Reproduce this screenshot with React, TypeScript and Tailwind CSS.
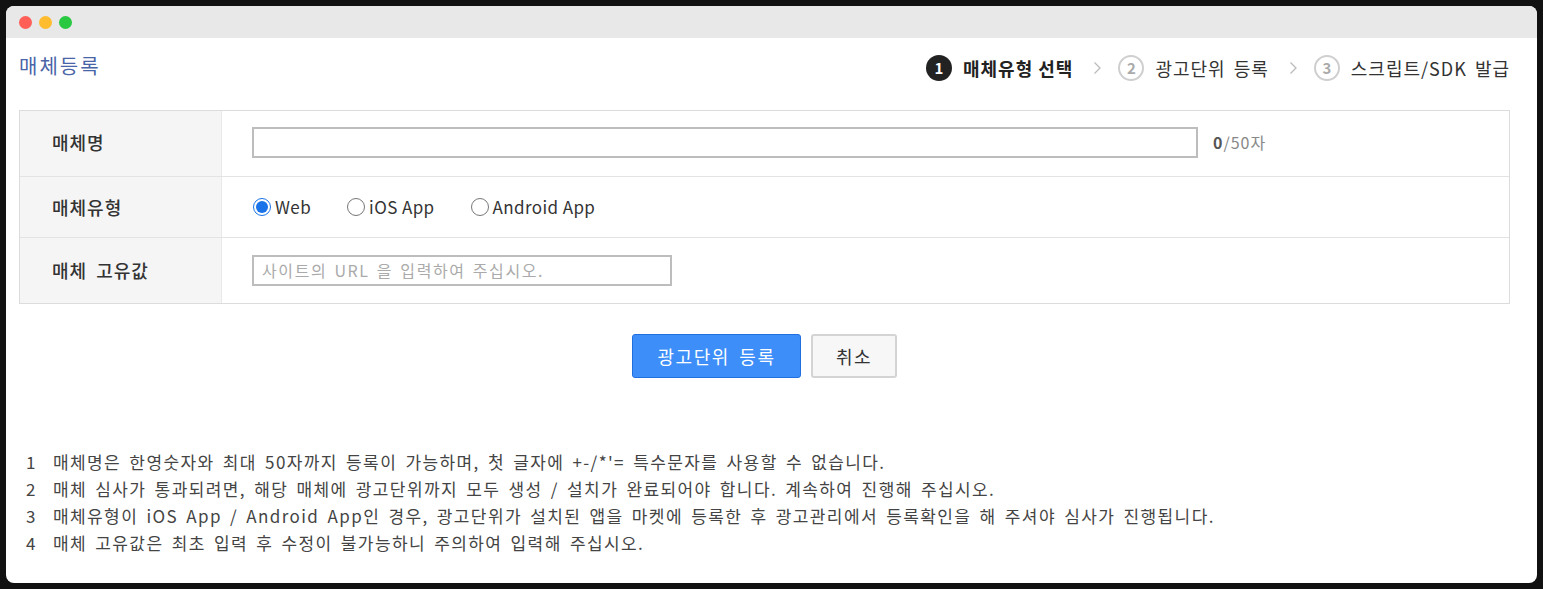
import { useState } from "react";

const font = { fontFamily: '"Noto Sans CJK KR", "Noto Sans", sans-serif' };

// Step indicator in the page header
const Step: React.FC<{ n: number; label: string; active?: boolean }> = ({ n, label, active }) => (
  <div className="flex items-center gap-[11px]">
    {active ? (
      <span className="flex h-[26px] w-[26px] items-center justify-center rounded-full bg-[#222] text-[15px] font-bold text-white">{n}</span>
    ) : (
      <span className="flex h-[26px] w-[26px] items-center justify-center rounded-full border-2 border-[#cfcfcf] text-[15px] font-bold text-[#aaa]">{n}</span>
    )}
    <span
      className={
        active
          ? "text-[18px] font-bold tracking-[1px] text-[#222]"
          : "text-[18px] tracking-[1px] [word-spacing:3px] text-[#333]"
      }
    >
      {label}
    </span>
  </div>
);

const Chevron: React.FC = () => (
  <svg width="9" height="14" viewBox="0 0 9 14" className="ml-[20px] mr-[16px]">
    <path d="M1.5 1.5 L7 7 L1.5 12.5" fill="none" stroke="#bbb" strokeWidth="1.3" />
  </svg>
);

const Radio: React.FC<{ label: string; checked: boolean; onClick: () => void }> = ({ label, checked, onClick }) => (
  <label className="flex cursor-pointer items-center gap-[4px] text-[17px] tracking-[0.4px] text-[#333]" onClick={onClick}>
    <span className={"flex h-[18px] w-[18px] items-center justify-center rounded-full border " + (checked ? "border-[#1a73e8]" : "border-[#777]")}>
      {checked && <span className="h-[12px] w-[12px] rounded-full bg-[#1a73e8]" />}
    </span>
    {label}
  </label>
);

const notes: string[] = [
  "매체명은 한영숫자와 최대 50자까지 등록이 가능하며, 첫 글자에 +-/*'= 특수문자를 사용할 수 없습니다.",
  "매체 심사가 통과되려면, 해당 매체에 광고단위까지 모두 생성 / 설치가 완료되어야 합니다. 계속하여 진행해 주십시오.",
  "매체유형이 iOS App / Android App인 경우, 광고단위가 설치된 앱을 마켓에 등록한 후 광고관리에서 등록확인을 해 주셔야 심사가 진행됩니다.",
  "매체 고유값은 최초 입력 후 수정이 불가능하니 주의하여 입력해 주십시오.",
];

const label = "flex w-[202px] shrink-0 items-center border-r border-[#e8e8e8] bg-[#f5f5f5] pl-[32px] text-[18px] font-medium tracking-[1px] [word-spacing:4px] text-[#333]";

const App: React.FC = () => {
  const [type, setType] = useState<string>("Web");
  const [name, setName] = useState<string>("");

  return (
    <div className="h-[589px] w-full bg-[#111] px-[6px] pt-[6px]" style={font}>
      <div className="flex h-[577px] flex-col overflow-hidden rounded-[8px] bg-white">
        {/* TITLE BAR */}
        <div className="flex h-[32px] items-center gap-[7px] bg-[#e8e8e8] pl-[13px]">
          <span className="h-[13px] w-[13px] rounded-full bg-[#ff5f57]" />
          <span className="h-[13px] w-[13px] rounded-full bg-[#febc2e]" />
          <span className="h-[13px] w-[13px] rounded-full bg-[#28c840]" />
        </div>

        {/* CONTENT */}
        <div className="flex flex-col pl-[13px] pr-[27px]">
          <div className="flex h-[60px] items-center justify-between">
            <h1 className="pb-[4px] text-[20px] tracking-[2px] text-[#4a64a8]">매체등록</h1>
            <div className="flex items-center">
              <Step n={1} label="매체유형 선택" active />
              <Chevron />
              <Step n={2} label="광고단위 등록" />
              <Chevron />
              <Step n={3} label="스크립트/SDK 발급" />
            </div>
          </div>

          {/* FORM TABLE */}
          <div className="mt-[12px] border border-[#dcdcdc]">
            <div className="flex h-[66px] border-b border-[#e3e3e3]">
              <div className={label + " pb-[3px]"}>매체명</div>
              <div className="flex flex-1 items-center pl-[30px] pb-[3px]">
                <input
                  className="h-[31px] w-[946px] border-2 border-[#bdbdbd] px-2 text-[16px] outline-none"
                  value={name}
                  onChange={(e) => setName(e.target.value.slice(0, 50))}
                />
                <span className="ml-[15px] text-[16px] tracking-[1px] text-[#888]">
                  <span className="font-bold text-[#555]">{name.length}</span>/50자
                </span>
              </div>
            </div>
            <div className="flex h-[61px] border-b border-[#e3e3e3]">
              <div className={label}>매체유형</div>
              <div className="flex flex-1 items-center gap-[36px] pl-[31px]">
                {["Web", "iOS App", "Android App"].map((t) => (
                  <Radio key={t} label={t} checked={type === t} onClick={() => setType(t)} />
                ))}
              </div>
            </div>
            <div className="flex h-[65px]">
              <div className={label}>매체 고유값</div>
              <div className="flex flex-1 items-center pl-[30px] pb-[1px]">
                <input
                  className="h-[31px] w-[420px] border-2 border-[#bdbdbd] px-[8px] text-[16px] tracking-[1.6px] [word-spacing:2px] outline-none placeholder:text-[#aaa]"
                  placeholder="사이트의 URL 을 입력하여 주십시오."
                />
              </div>
            </div>
          </div>

          {/* BUTTONS */}
          <div className="mt-[30px] flex justify-center gap-[10px]">
            <button className="h-[44px] w-[169px] rounded-[3px] border border-[#1f6fe0] bg-[#3d8ef8] text-[18px] tracking-[1.5px] [word-spacing:4px] text-white">광고단위 등록</button>
            <button className="h-[44px] w-[86px] rounded-[3px] border-2 border-[#d4d4d4] bg-[#f7f7f7] text-[18px] tracking-[1.5px] text-[#333]">취소</button>
          </div>

          {/* NOTES */}
          <ol className="mt-[72px] flex flex-col gap-[4px] pl-[7px] text-[17px] leading-[23px] tracking-[1.4px] [word-spacing:3px] text-[#444]">
            {notes.map((n, i) => (
              <li key={i} className="flex">
                <span className="w-[27px] shrink-0">{i + 1}</span>
                <span>{n}</span>
              </li>
            ))}
          </ol>
        </div>
      </div>
    </div>
  );
};

export default App;
